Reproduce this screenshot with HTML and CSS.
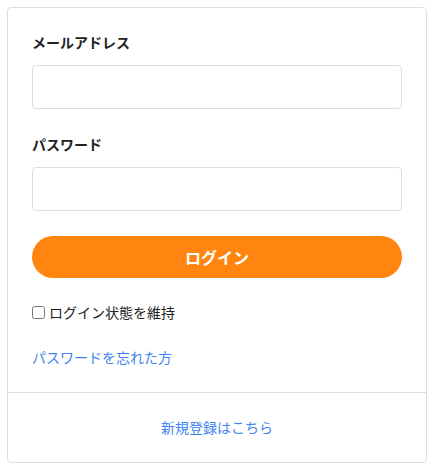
FILE: index.html
```html
<!DOCTYPE html>
<html lang="ja">
<head>
<meta charset="utf-8">
<link rel="stylesheet" href="styles.css">
</head>
<body>
<div class="card">
  <form class="card-body">
    <div class="field">
      <label class="field-label">メールアドレス</label>
      <input class="field-input" type="email">
    </div>
    <div class="field">
      <label class="field-label">パスワード</label>
      <input class="field-input" type="password">
    </div>
    <button class="btn-login" type="button">ログイン</button>
    <label class="remember"><input class="remember-box" type="checkbox">ログイン状態を維持</label>
    <a class="link forgot" href="#">パスワードを忘れた方</a>
  </form>
  <div class="card-footer">
    <a class="link" href="#">新規登録はこちら</a>
  </div>
</div>
</body>
</html>
```

FILE: styles.css
```css
* { box-sizing: border-box; }
html, body { margin: 0; padding: 0; background: #fff; }
body {
  padding: 7px 7px 0 7px;
  font-family: "Noto Sans CJK JP", "Noto Sans", sans-serif;
  color: #222;
  font-size: 14px;
  line-height: 21px;
}
.card {
  width: 420px;
  border: 1px solid #dedede;
  border-radius: 4px;
  background: #fff;
}
.card-body {
  margin: 0;
  padding: 24px 24px 24px 24px;
  display: flex;
  flex-direction: column;
}
.field {
  display: flex;
  flex-direction: column;
  margin-bottom: 25px;
}
.field-label {
  font-weight: 700;
  font-size: 14px;
  line-height: 21px;
  margin-bottom: 12px;
  color: #222;
}
.field-input {
  height: 44px;
  width: 100%;
  border: 1px solid #dedede;
  border-radius: 4px;
  padding: 0 12px;
  font-size: 14px;
  outline: none;
}
.btn-login {
  height: 42px;
  border: none;
  border-radius: 21px;
  background: #ff8510;
  color: #fff;
  font-family: inherit;
  font-weight: 700;
  font-size: 16px;
  padding: 0;
  margin-bottom: 24px;
  cursor: pointer;
}
.remember {
  display: flex;
  align-items: center;
  font-size: 14px;
  line-height: 21px;
  color: #222;
  margin-bottom: 24px;
}
.remember-box {
  width: 13px;
  height: 13px;
  margin: 0 4px 0 0;
}
.link {
  color: #3f84f2;
  text-decoration: none;
  font-size: 14px;
  line-height: 21px;
}
.forgot { align-self: flex-start; }
.card-footer {
  border-top: 1px solid #dedede;
  padding: 24px 0;
  text-align: center;
}
```
